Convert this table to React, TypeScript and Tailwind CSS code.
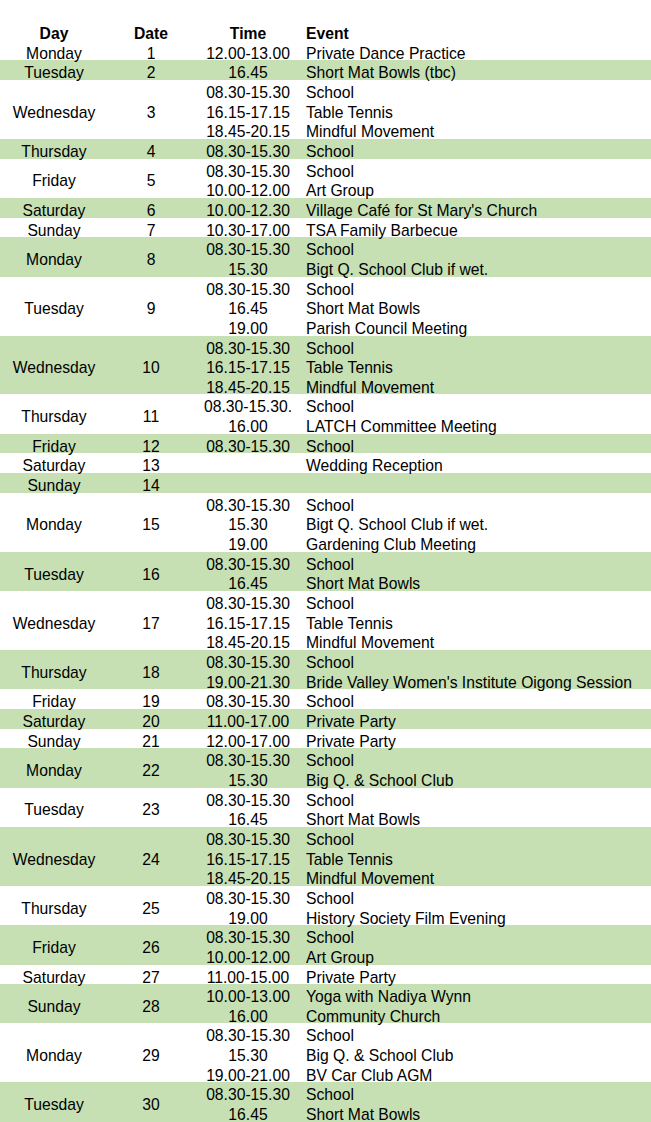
import React from "react";

type Row = { day: string; date: number; items: [string, string][] };

const S = "08.30-15.30";
const rows: Row[] = [
  { day: "Monday", date: 1, items: [["12.00-13.00", "Private Dance Practice"]] },
  { day: "Tuesday", date: 2, items: [["16.45", "Short Mat Bowls (tbc)"]] },
  { day: "Wednesday", date: 3, items: [[S, "School"], ["16.15-17.15", "Table Tennis"], ["18.45-20.15", "Mindful Movement"]] },
  { day: "Thursday", date: 4, items: [[S, "School"]] },
  { day: "Friday", date: 5, items: [[S, "School"], ["10.00-12.00", "Art Group"]] },
  { day: "Saturday", date: 6, items: [["10.00-12.30", "Village Café for St Mary's Church"]] },
  { day: "Sunday", date: 7, items: [["10.30-17.00", "TSA Family Barbecue"]] },
  { day: "Monday", date: 8, items: [[S, "School"], ["15.30", "Bigt Q. School Club if wet."]] },
  { day: "Tuesday", date: 9, items: [[S, "School"], ["16.45", "Short Mat Bowls"], ["19.00", "Parish Council Meeting"]] },
  { day: "Wednesday", date: 10, items: [[S, "School"], ["16.15-17.15", "Table Tennis"], ["18.45-20.15", "Mindful Movement"]] },
  { day: "Thursday", date: 11, items: [["08.30-15.30.", "School"], ["16.00", "LATCH Committee Meeting"]] },
  { day: "Friday", date: 12, items: [[S, "School"]] },
  { day: "Saturday", date: 13, items: [["", "Wedding Reception"]] },
  { day: "Sunday", date: 14, items: [["", ""]] },
  { day: "Monday", date: 15, items: [[S, "School"], ["15.30", "Bigt Q. School Club if wet."], ["19.00", "Gardening Club Meeting"]] },
  { day: "Tuesday", date: 16, items: [[S, "School"], ["16.45", "Short Mat Bowls"]] },
  { day: "Wednesday", date: 17, items: [[S, "School"], ["16.15-17.15", "Table Tennis"], ["18.45-20.15", "Mindful Movement"]] },
  { day: "Thursday", date: 18, items: [[S, "School"], ["19.00-21.30", "Bride Valley Women's Institute Oigong Session"]] },
  { day: "Friday", date: 19, items: [[S, "School"]] },
  { day: "Saturday", date: 20, items: [["11.00-17.00", "Private Party"]] },
  { day: "Sunday", date: 21, items: [["12.00-17.00", "Private Party"]] },
  { day: "Monday", date: 22, items: [[S, "School"], ["15.30", "Big Q. & School Club"]] },
  { day: "Tuesday", date: 23, items: [[S, "School"], ["16.45", "Short Mat Bowls"]] },
  { day: "Wednesday", date: 24, items: [[S, "School"], ["16.15-17.15", "Table Tennis"], ["18.45-20.15", "Mindful Movement"]] },
  { day: "Thursday", date: 25, items: [[S, "School"], ["19.00", "History Society Film Evening"]] },
  { day: "Friday", date: 26, items: [[S, "School"], ["10.00-12.00", "Art Group"]] },
  { day: "Saturday", date: 27, items: [["11.00-15.00", "Private Party"]] },
  { day: "Sunday", date: 28, items: [["10.00-13.00", "Yoga with Nadiya Wynn"], ["16.00", "Community Church"]] },
  { day: "Monday", date: 29, items: [[S, "School"], ["15.30", "Big Q. & School Club"], ["19.00-21.00", "BV Car Club AGM"]] },
  { day: "Tuesday", date: 30, items: [[S, "School"], ["16.45", "Short Mat Bowls"]] },
];

function Line({ children, className = "" }: { children?: React.ReactNode; className?: string }) {
  return (
    <div className={"h-[19.67px] leading-[19.67px] pt-[3px] whitespace-nowrap " + className}>
      {children}
    </div>
  );
}

export default function App() {
  return (
    <div
      className="w-[651px] h-[1122px] overflow-hidden bg-white text-black pt-[21px] text-[15.7px]"
      style={{ fontFamily: '"Liberation Sans", Arial, sans-serif' }}
    >
      <div className="grid grid-cols-[108px_86px_108px_1fr] font-bold">
        <Line className="text-center">Day</Line>
        <Line className="text-center">Date</Line>
        <Line className="text-center">Time</Line>
        <Line className="pl-[4px]">Event</Line>
      </div>
      {rows.map((r) => (
        <div
          key={r.date}
          className={
            "grid grid-cols-[108px_86px_108px_1fr] " + (r.date % 2 === 0 ? "bg-[#c6e0b4]" : "bg-white")
          }
        >
          <div className="flex flex-col justify-center">
            <Line className="text-center">{r.day}</Line>
          </div>
          <div className="flex flex-col justify-center">
            <Line className="text-center">{r.date}</Line>
          </div>
          <div className="flex flex-col">
            {r.items.map((it, i) => (
              <Line key={i} className="text-center">
                {it[0]}
              </Line>
            ))}
          </div>
          <div className="flex flex-col">
            {r.items.map((it, i) => (
              <Line key={i} className="pl-[4px]">
                {it[1]}
              </Line>
            ))}
          </div>
        </div>
      ))}
    </div>
  );
}
